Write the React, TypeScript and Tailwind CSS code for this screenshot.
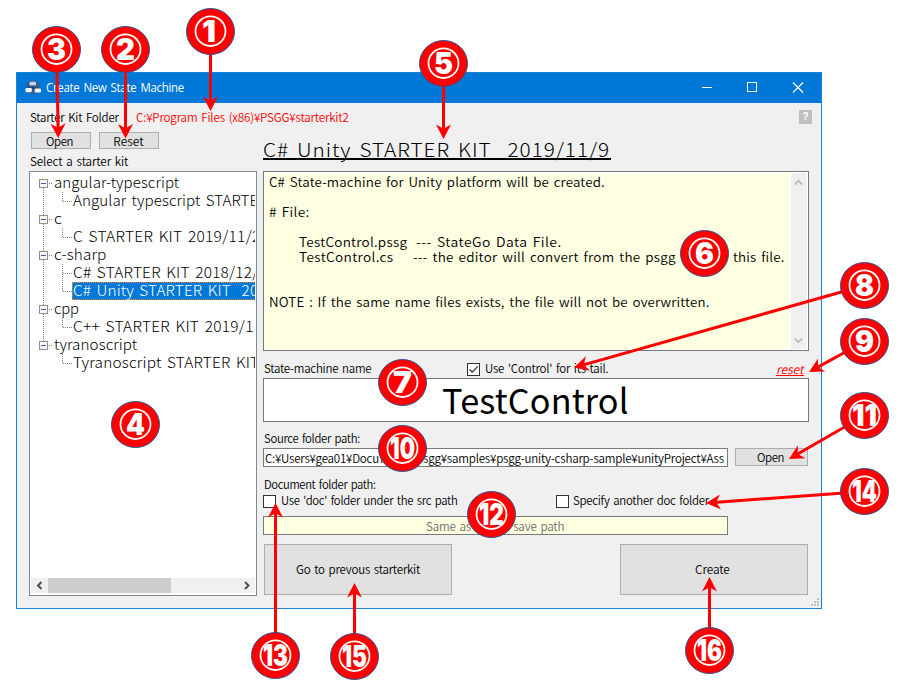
import { useLayoutEffect, useRef, useState, type ReactNode } from "react";

/** Text widened to `w` pixels, partly by letter spacing and partly by stretching its letters. */
function Fit({ w, className = "", children }: { w: number; className?: string; children: string }) {
  const ref = useRef<HTMLSpanElement>(null);
  const [fit, setFit] = useState({ spacing: 0, scale: 1 });
  useLayoutEffect(() => {
    const el = ref.current;
    if (!el) return;
    const previous = el.style.letterSpacing;
    el.style.letterSpacing = "0px";
    const natural = el.offsetWidth;
    el.style.letterSpacing = previous;
    const target = w - 1;
    const scale = Math.sqrt(target / natural);
    setFit({ scale, spacing: (target / scale - natural) / children.length });
  }, [w, children]);
  return (
    <span className={`inline-block shrink-0 whitespace-pre ${className}`} style={{ width: w }}>
      <span
        ref={ref}
        className="inline-block origin-left [word-spacing:0.12em]"
        style={{ letterSpacing: `${fit.spacing}px`, transform: `scaleX(${fit.scale})` }}
      >
        {children}
      </span>
    </span>
  );
}

function PushButton({ className, children }: { className: string; children: ReactNode }) {
  return (
    <button className={`flex shrink-0 items-center justify-center border border-[#adadad] bg-[#e1e1e1] ${className}`}>
      {children}
    </button>
  );
}

function CheckBox({ checked = false }: { checked?: boolean }) {
  return (
    <span className="flex h-[13px] w-[13px] shrink-0 items-center justify-center border border-[#333] bg-white">
      {checked && (
        <svg width="11" height="11" viewBox="0 0 11 11" fill="none" stroke="#333" strokeWidth="1.2">
          <path d="M1.5 5.5 4.2 8.2 9.8 2.4" />
        </svg>
      )}
    </span>
  );
}

type Row = { text: string; w: number; kind: "first" | "group" | "last" | "child" | "tail"; selected?: boolean; more?: boolean };

const rows: Row[] = [
  { text: "angular-typescript", w: 126, kind: "first" },
  { text: "Angular typescript STARTER", w: 196, kind: "child" },
  { text: "c", w: 10, kind: "group" },
  { text: "C STARTER KIT 2019/11/2", w: 189, kind: "child" },
  { text: "c-sharp", w: 54, kind: "group" },
  { text: "C# STARTER KIT 2018/12/", w: 187, kind: "child", more: true },
  { text: "C# Unity STARTER KIT  2019", w: 203, kind: "child", selected: true },
  { text: "cpp", w: 26, kind: "group" },
  { text: "C++ STARTER KIT 2019/1", w: 182, kind: "child" },
  { text: "tyranoscript", w: 84, kind: "last" },
  { text: "Tyranoscript STARTER KIT", w: 187, kind: "tail" },
];

function TreeGutter({ row }: { row: Row }) {
  const child = row.kind === "child" || row.kind === "tail";
  return (
    <svg
      className="shrink-0"
      width={child ? 41 : 22}
      height="18"
      fill="none"
      stroke="#808080"
      strokeDasharray="1 1"
      shapeRendering="crispEdges"
    >
      {row.kind !== "tail" && (
        <path d={row.kind === "first" ? "M12.5 10V18" : row.kind === "last" ? "M12.5 0V9" : "M12.5 0V18"} />
      )}
      {child ? (
        <path d={row.more ? "M31.5 0V18M32 9.5H41" : "M31.5 0V10M32 9.5H41"} />
      ) : (
        <>
          <path d="M18 9.5H22" />
          <rect x="8.5" y="5.5" width="8" height="8" fill="#f8f8f8" stroke="#919191" strokeDasharray="none" />
          <path d="M10 9.5H15" stroke="#3f5fa8" strokeDasharray="none" />
        </>
      )}
    </svg>
  );
}

function Tree() {
  return (
    <div className="mt-[2px] flex h-[425px] w-[228px] flex-col border border-[#828790] bg-white px-px pt-[2px] pb-[2px]">
      <div className="flex-1 overflow-hidden text-[15px] font-light">
        {rows.map((row) => (
          <div key={row.text} className="flex h-[18px] leading-[15px]">
            <TreeGutter row={row} />
            <div
              className={
                row.selected
                  ? "flex h-[18px] flex-1 border border-r-0 border-dotted border-[#ff8728] bg-[#0078d7] leading-[14px] text-white"
                  : "flex flex-1 pl-px"
              }
            >
              <Fit w={row.w}>{row.text}</Fit>
            </div>
          </div>
        ))}
      </div>
      <div className="flex h-[15px] items-stretch bg-[#f0f0f0]">
        <svg width="17" height="15" fill="none" stroke="#505050" strokeWidth="2">
          <path d="M10.5 4 7 7.5 10.5 11" />
        </svg>
        <div className="w-[123px] bg-[#cdcdcd]" />
        <div className="flex-1" />
        <svg width="17" height="15" fill="none" stroke="#505050" strokeWidth="2">
          <path d="M7 4 10.5 7.5 7 11" />
        </svg>
      </div>
    </div>
  );
}

function Description() {
  return (
    <div className="mt-[10px] flex h-[180px] border border-[#7a7a7a] bg-white p-px">
      <div className="flex-1 bg-[#ffffe1] pt-px pl-[4px] text-[13px] leading-[15px]">
        <div className="flex h-[15px]"><Fit w={337}>C# State-machine for Unity platform will be created.</Fit></div>
        <div className="mt-[15px] flex h-[15px]"><Fit w={41}># File:</Fit></div>
        <div className="mt-[15px] flex h-[15px] pl-[30px]">
          <Fit w={109}>TestControl.pssg</Fit>
          <Fit w={147} className="ml-[8px]">--- StateGo Data File.</Fit>
        </div>
        <div className="flex h-[15px] pl-[30px]">
          <Fit w={95}>TestControl.cs</Fit>
          <Fit w={264} className="ml-[19px]">--- the editor will convert from the psgg</Fit>
          <Fit w={56}> file to </Fit>
          <Fit w={53}>this file.</Fit>
        </div>
        <div className="mt-[30px] flex h-[15px]"><Fit w={441}>NOTE : If the same name files exists, the file will not be overwritten.</Fit></div>
      </div>
      <div className="flex w-[17px] flex-col justify-between border-l border-white bg-[#f0f0f0]">
        <svg width="16" height="17" fill="none" stroke="#bfbfbf" strokeWidth="2">
          <path d="M3.8 11.5 7.5 7.7 11.2 11.5" />
        </svg>
        <svg width="16" height="17" fill="none" stroke="#bfbfbf" strokeWidth="2">
          <path d="M3.8 6.5 7.5 10.2 11.2 6.5" />
        </svg>
      </div>
    </div>
  );
}

function TitleBar() {
  return (
    <div className="flex h-[30px] items-center bg-[#0078d7] pl-2 text-white">
      <svg width="17" height="16" viewBox="0 0 17 16">
        <circle cx="8" cy="7.5" r="7.2" fill="#2f5f94" />
        <path d="M8 4V8M3.5 11V8H13V11" stroke="#1d3c63" fill="none" />
        <rect x="4.5" y="1.8" width="6.5" height="3.6" rx="1.2" fill="#c3d6e4" />
        <rect x="0.5" y="8" width="6.3" height="4.2" rx="1.2" fill="#f2f6fa" />
        <rect x="9.7" y="8.6" width="6.3" height="4" rx="1.2" fill="#f2f6fa" />
      </svg>
      <Fit w={139} className="ml-1 font-['Open_Sans','Noto_Sans',sans-serif] text-[12px] leading-[16px] font-normal">
        Create New State Machine
      </Fit>
      <svg className="ml-auto" width="120" height="30" fill="none" stroke="#fff">
        <path d="M1 14.5H11" />
        <rect x="46.5" y="9.5" width="9" height="9" />
        <path d="M92 9.5 102 19.5M102 9.5 92 19.5" strokeWidth="1.1" />
      </svg>
    </div>
  );
}

function Window() {
  return (
    <div className="ml-4 flex h-[537px] w-[806px] flex-col border border-[#1883d7] bg-[#f0f0f0]">
      <TitleBar />
      <div className="flex h-[22px] pt-[6px] pl-[13px] leading-[16px]">
        <Fit w={90}>Starter Kit Folder</Fit>
        <Fit w={214} className="ml-4 text-[#f00]">C:¥Program Files (x86)¥PSGG¥starterkit2</Fit>
        <div className="mt-px mr-[9px] ml-auto flex h-[14px] w-[13px] items-center justify-center bg-[#c0c0c0] font-['Liberation_Sans',sans-serif] text-[10px] font-bold text-white">
          ?
        </div>
      </div>
      <div className="flex gap-[6px] pl-3">
        <div className="w-[228px]">
          <div className="flex gap-2 pt-[7px] pl-[2px]">
            <PushButton className="h-[17px] w-[60px] pr-[2px] pb-px leading-[15px]"><Fit w={28}>Open</Fit></PushButton>
            <PushButton className="h-[17px] w-[60px] pr-px pb-px leading-[15px]"><Fit w={31}>Reset</Fit></PushButton>
          </div>
          <div className="mt-1 flex h-4 pl-px leading-[16px]"><Fit w={99}>Select a starter kit</Fit></div>
          <Tree />
        </div>
        <div className="w-[546px]">
          <div className="mt-3 flex h-6 text-[19px] leading-[24px] font-light">
            <Fit w={348} className="h-[23px] border-b-2 border-black">C# Unity STARTER KIT  2019/11/9</Fit>
          </div>
          <Description />
          <div className="mt-[9px] flex h-4 items-end leading-[16px]">
            <Fit w={108} className="ml-px">State-machine name</Fit>
            <span className="w-[95px]" />
            <CheckBox checked />
            <Fit w={124} className="ml-[5px]">Use 'Control' for its tail.</Fit>
            <Fit w={28} className="mr-[5px] ml-auto h-[15px] border-b border-[#f00] text-[#f00] italic">reset</Fit>
          </div>
          <div className="mt-[2px] flex h-[44px] items-center justify-center border border-[#7a7a7a] bg-white text-[34px] leading-[42px] font-normal">
            <Fit w={188}>TestControl</Fit>
          </div>
          <div className="mt-2 flex h-4 pl-px leading-[16px]"><Fit w={97}>Source folder path:</Fit></div>
          <div className="mt-[2px] flex gap-[7px]">
            <div className="flex h-[19px] w-[465px] items-center border border-[#7a7a7a] bg-white pl-px leading-[15px]">
              <Fit w={115}>C:¥Users¥gea01¥Docu</Fit>
              <Fit w={43}>ments¥p</Fit>
              <Fit w={302}>sgg¥samples¥psgg-unity-csharp-sample¥unityProject¥Ass</Fit>
            </div>
            <PushButton className="h-[18px] w-[73px] pr-px leading-[16px]"><Fit w={28}>Open</Fit></PushButton>
          </div>
          <div className="mt-[9px] flex h-4 pl-px leading-[16px]"><Fit w={113}>Document folder path:</Fit></div>
          <div className="flex h-4 items-end leading-[16px]">
            <CheckBox />
            <Fit w={178} className="ml-[5px]">Use 'doc' folder under the src path</Fit>
            <span className="w-[97px]" />
            <CheckBox />
            <Fit w={137} className="ml-1">Specify another doc folder</Fit>
          </div>
          <div className="mt-2 flex h-[19px] w-[465px] items-center justify-center border border-[#7a7a7a] bg-[#ffffe1] pr-px pb-px leading-[15px] text-[#6d6d6d]">
            <Fit w={139}>Same as source save path</Fit>
          </div>
          <div className="mt-[9px] flex justify-between pr-px pl-px">
            <PushButton className="h-[51px] w-[188px] pb-[2px] leading-[16px]"><Fit w={125}>Go to prevous starterkit</Fit></PushButton>
            <PushButton className="h-[51px] w-[188px] pr-[2px] pb-[2px] leading-[16px]"><Fit w={36}>Create</Fit></PushButton>
          </div>
        </div>
      </div>
      <svg className="mt-[2px] mr-[2px] ml-auto" width="8" height="8" fill="#bfbfbf">
        <path d="M6 0h2v2h-2zM3 3h2v2h-2zM6 3h2v2h-2zM0 6h2v2h-2zM3 6h2v2h-2zM6 6h2v2h-2z" />
      </svg>
    </div>
  );
}

/** Numbered call-outs: centre of the disc and, where there is one, the arrow's tip. */
const callouts: { n: number; x: number; y: number; tip?: [number, number] }[] = [
  { n: 1, x: 210.5, y: 31.5, tip: [210.5, 111] },
  { n: 2, x: 125.5, y: 49.5, tip: [125.5, 138.5] },
  { n: 3, x: 56.5, y: 49.5, tip: [58.3, 138] },
  { n: 4, x: 135.5, y: 424.5 },
  { n: 5, x: 443.5, y: 63.5, tip: [443.5, 139] },
  { n: 6, x: 704.5, y: 253.5 },
  { n: 7, x: 402.5, y: 382.5 },
  { n: 8, x: 864.5, y: 285.5, tip: [574, 367.5] },
  { n: 9, x: 864.5, y: 341.5, tip: [809, 372] },
  { n: 10, x: 402.5, y: 448.5 },
  { n: 11, x: 864.5, y: 415.5, tip: [789, 459] },
  { n: 12, x: 491.5, y: 514.5 },
  { n: 13, x: 275.5, y: 655.5, tip: [275.5, 503] },
  { n: 14, x: 864.5, y: 491.5, tip: [706, 503] },
  { n: 15, x: 354.5, y: 656.5, tip: [354.5, 583] },
  { n: 16, x: 709.5, y: 650.5, tip: [709.5, 577] },
];

function Callouts() {
  return (
    <svg className="absolute inset-0" width="908" height="693" viewBox="0 0 908 693">
      {callouts.map(({ n, x, y, tip }) => {
        if (!tip) return null;
        const angle = (Math.atan2(tip[1] - y, tip[0] - x) * 180) / Math.PI;
        const length = Math.hypot(tip[0] - x, tip[1] - y);
        return (
          <g key={n} transform={`translate(${tip[0]} ${tip[1]}) rotate(${angle})`}>
            <path d={`M${-length} 0H-8`} stroke="#f00" strokeWidth="3" />
            <path d="M0 0-14.5-7.5-10.2 0-14.5 7.5Z" fill="#f00" />
          </g>
        );
      })}
      {callouts.map(({ n, x, y }) => (
        <g key={n} transform={`translate(${x} ${y})`}>
          <ellipse rx="24" ry="23" fill="#f00" stroke="#2f528f" />
          <ellipse cy="-0.3" rx="15" ry="14.8" fill="none" stroke="#fff" strokeWidth="1.8" />
          <text
            x={n === 1 ? -1.5 : 0}
            y="10.8"
            textAnchor="middle"
            textLength={n > 9 ? 25 : n === 1 ? 14 : 19}
            lengthAdjust="spacingAndGlyphs"
            fill="#fff"
            className="font-['Inter','Liberation_Sans',sans-serif] text-[30px] font-black"
          >
            {n}
          </text>
        </g>
      ))}
    </svg>
  );
}

export default function App() {
  return (
    <div className="relative h-[693px] w-[908px] overflow-hidden bg-white pt-[72px] font-['Noto_Sans_CJK_JP',sans-serif] text-[12px] font-[350] text-black">
      <Window />
      <Callouts />
    </div>
  );
}
